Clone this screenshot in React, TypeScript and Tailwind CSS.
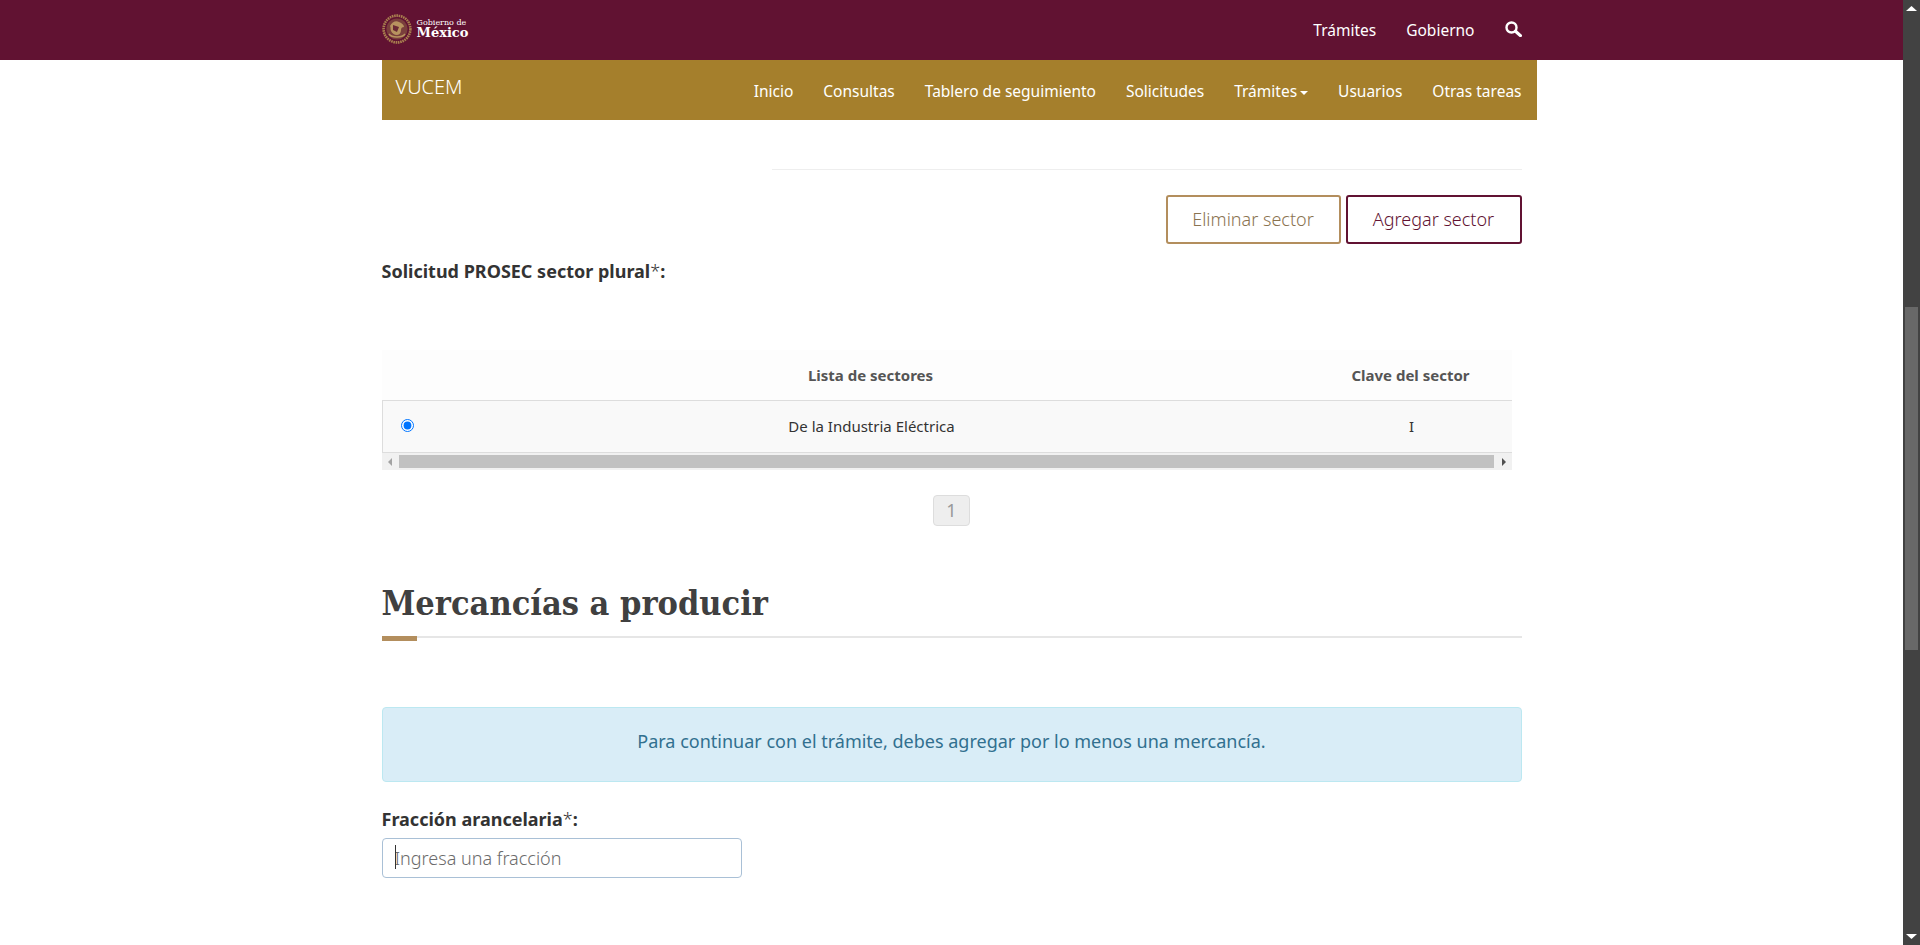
const navItems = ["Inicio", "Consultas", "Tablero de seguimiento", "Solicitudes"];

const Seal = () => (
  <svg width="30" height="30" viewBox="0 0 30 30" className="shrink-0">
    <circle cx="15" cy="15" r="13.4" fill="none" stroke="#a9804f" strokeWidth="2.6" strokeDasharray="1.6 0.7" />
    <circle cx="15" cy="15" r="10.6" fill="#7a3f3c" />
    <path d="M8 12c2-4 6-6 9-4 3 1 5 3 5 5-2 0-3 1-3 3s-1 5-4 5-5-2-6-4 0-4-1-5z" fill="#b8935f" />
    <path d="M11 11l6 2-2 5-4-2z" fill="#6b2a35" />
    <path d="M7 20c3 4 13 4 16 0" fill="none" stroke="#b8935f" strokeWidth="1.6" />
  </svg>
);

const SearchGlyph = () => (
  <svg width="17" height="16" viewBox="0 0 17 16" fill="none">
    <circle cx="6.5" cy="6.5" r="5" stroke="#fff" strokeWidth="2.4" />
    <path d="M10.5 10.2L15.4 14.6" stroke="#fff" strokeWidth="3.2" strokeLinecap="round" />
  </svg>
);

const TableArrow = ({ right }: { right?: boolean }) => (
  <svg width="6" height="8" viewBox="0 0 6 8">
    <path d={right ? "M1 0l4 4-4 4z" : "M5 0L1 4l4 4z"} fill={right ? "#505050" : "#a3a3a3"} />
  </svg>
);

const PageScrollbar = () => (
  <aside className="w-[17px] shrink-0 h-full bg-[#424242] flex flex-col items-center justify-between py-[6px] relative">
    <svg width="11" height="6" viewBox="0 0 11 6">
      <path d="M5.5 0L11 5H0z" fill="#fff" />
    </svg>
    <div className="absolute left-[2px] top-[307px] w-[13px] h-[343px] bg-[#686868]" />
    <svg width="11" height="6" viewBox="0 0 11 6">
      <path d="M5.5 6L11 1H0z" fill="#fff" />
    </svg>
  </aside>
);

const App = () => {
  return (
    <div className="flex h-[945px] w-full overflow-hidden bg-white text-[#333] font-['Noto_Sans',sans-serif]">
      <main className="flex-1 min-w-0">
        <header className="h-[60px] bg-[#611232]">
          <div className="w-[1170px] mx-auto px-[15px] h-full flex items-center justify-between">
            <div className="flex items-center gap-[5px] text-white font-['DejaVu_Serif',serif] mt-[-2px]">
              <Seal />
              <div className="leading-none">
                <p className="text-[8px]">Gobierno de</p>
                <p className="text-[13px] font-bold mt-[-1px]">México</p>
              </div>
            </div>
            <nav className="flex items-center gap-[30px] text-white text-[15.5px] mt-[2px]">
              <span>Trámites</span>
              <span>Gobierno</span>
              <span className="mt-[-4px]">
                <SearchGlyph />
              </span>
            </nav>
          </div>
        </header>

        <div className="w-[1170px] mx-auto pl-[15px]">
          <div className="h-[60px] bg-[#a57f2c] flex items-center justify-between pl-[14px] pr-[15px] text-white">
            <span className="text-[20px] font-light mt-[-6px]">VUCEM</span>
            <nav className="flex items-center gap-[30px] text-[15.5px] mt-[3px]">
              {navItems.map((item) => (
                <span key={item}>{item}</span>
              ))}
              <span className="flex items-center gap-[3px]">
                Trámites
                <span className="w-0 h-0 border-x-[4px] border-x-transparent border-t-[4px] border-t-white mt-[2px]" />
              </span>
              <span>Usuarios</span>
              <span>Otras tareas</span>
            </nav>
          </div>
        </div>

        <div className="w-[1170px] mx-auto px-[15px]">
          <div className="ml-[390px] mt-[49px] border-t border-[#eeeeee]" />

          <div className="flex justify-end gap-[5px] mt-[25px]">
            <button className="w-[175px] h-[49px] border-2 border-[#b38e5d] rounded-[3px] text-[#8a7350] text-[18px] font-light">
              Eliminar sector
            </button>
            <button className="w-[176px] h-[49px] border-2 border-[#611232] rounded-[3px] text-[#611232] text-[18px] font-light">
              Agregar sector
            </button>
          </div>

          <p className="mt-[15px] text-[18px] font-bold leading-[24px]">
            Solicitud PROSEC sector plural<span className="font-light">*</span>:
          </p>

          <div className="w-[1130px] mt-[67px] bg-[#fdfdfd]">
            <div className="grid grid-cols-[50px_878px_202px] h-[51px] items-center text-[15px] font-bold text-[#555] border-b border-[#dddddd]">
              <span />
              <span className="text-center">Lista de sectores</span>
              <span className="text-center">Clave del sector</span>
            </div>
            <div className="grid grid-cols-[50px_878px_202px] h-[52px] items-center text-[15px] bg-[#f9f9f9] border-l border-b border-[#dddddd]">
              <span className="flex justify-center">
                <input type="radio" defaultChecked className="w-[13px] h-[13px] accent-[#0075ff] m-0 mt-[-3px]" />
              </span>
              <span className="text-center">De la Industria Eléctrica</span>
              <span className="text-center">I</span>
            </div>
            <div className="h-[17px] bg-[#f1f1f1] flex items-center justify-between px-[5px]">
              <TableArrow />
              <div className="w-[1095px] h-[13px] bg-[#c1c1c1] mt-[-1px]" />
              <TableArrow right />
            </div>
          </div>

          <div className="flex justify-center mt-[25px]">
            <span className="w-[37px] h-[31px] flex items-center justify-center bg-[#eeeeee] border border-[#dddddd] rounded-[4px] text-[#999] text-[18px]">
              1
            </span>
          </div>

          <h2 className="mt-[53px] text-[34px] font-bold leading-[48px] text-[#404040] font-['DejaVu_Serif_Condensed','DejaVu_Serif',serif]">
            Mercancías a producir
          </h2>
          <div className="mt-[9px] border-t-2 border-[#e6e6e6] relative">
            <div className="absolute left-0 top-[-2px] w-[35px] h-[5px] bg-[#b38e5d]" />
          </div>

          <div className="mt-[69px] h-[75px] pb-[6px] flex items-center justify-center bg-[#d9edf7] border border-[#bce8f1] rounded-[4px] text-[#31708f] text-[18px]">
            Para continuar con el trámite, debes agregar por lo menos una mercancía.
          </div>

          <p className="mt-[25px] text-[18px] font-bold leading-[24px]">
            Fracción arancelaria<span className="font-light">*</span>:
          </p>
          <div className="mt-[7px] w-[360px] h-[40px] flex items-center border border-[#a9c0d6] rounded-[4px] px-[12px] relative">
            <span className="absolute left-[12px] top-[6px] w-px h-[24px] bg-[#333]" />
            <span className="text-[18px] font-light text-[#6b6b6b]">Ingresa una fracción</span>
          </div>
        </div>
      </main>
      <PageScrollbar />
    </div>
  );
};

export default App;
